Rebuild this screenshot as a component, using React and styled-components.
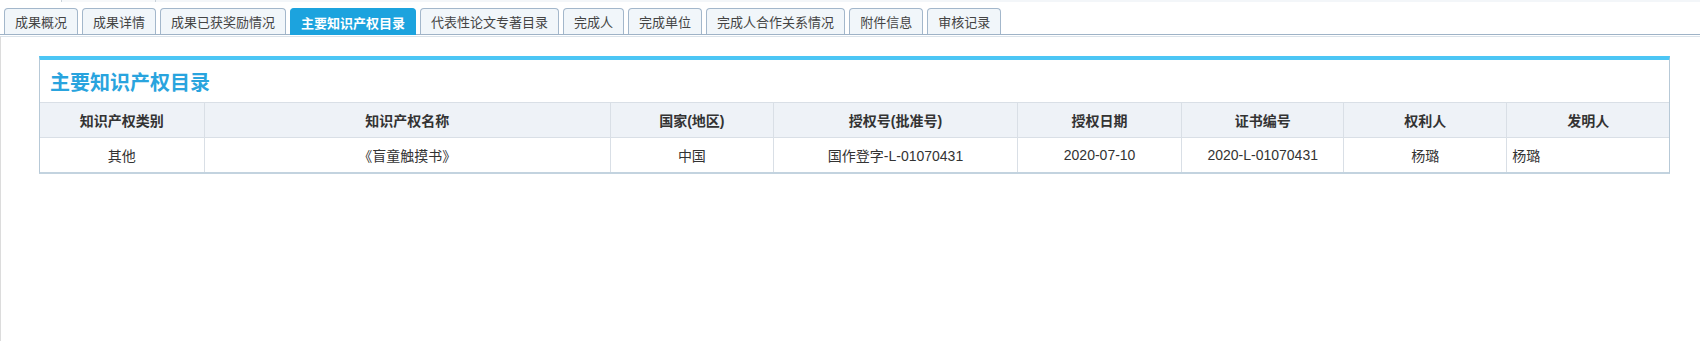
import React from 'react';
import styled, { createGlobalStyle } from 'styled-components';

const GlobalStyle = createGlobalStyle`
  html, body {
    margin: 0;
    padding: 0;
    background: #fff;
  }
  body {
    font-family: "Liberation Sans", "Noto Sans CJK SC", sans-serif;
    color: #333;
  }
`;

const Page = styled.div`
  width: 1700px;
  height: 341px;
  overflow: hidden;
  display: flex;
  flex-direction: column;
`;

const TopStrip = styled.div`
  height: 2px;
  display: flex;
  background: #f3f6f9;
`;

const StripCell = styled.div`
  width: ${(p) => p.w}px;
  background: ${(p) => p.bg};
  border-right: 1px solid #c9d2da;
`;

const TabBar = styled.div`
  display: flex;
  align-items: flex-end;
  gap: 4px;
  padding: 6px 0 0 4px;
  border-bottom: 1px solid #9fb3c7;
`;

const Tab = styled.div`
  position: relative;
  height: 26px;
  box-sizing: border-box;
  padding: 0 10px;
  display: flex;
  align-items: center;
  font-size: 13px;
  white-space: nowrap;
  border: 1px solid ${(p) => (p.active ? '#1ca3de' : '#a3b7cb')};
  border-bottom: none;
  border-radius: 4px 4px 0 0;
  background: ${(p) => (p.active ? '#1ca3de' : '#f1f6fa')};
  color: ${(p) => (p.active ? '#fff' : '#444')};
  font-weight: ${(p) => (p.active ? 'bold' : 'normal')};
  margin-bottom: ${(p) => (p.active ? '-1px' : '0')};
  height: ${(p) => (p.active ? '27px' : '26px')};
`;

const Content = styled.div`
  flex: 1;
  margin-top: 1px;
  border-top: 1px solid #dae2e9;
  border-left: 1px solid #dcdcdc;
  padding: 19px 30px 0 38px;
`;

const Panel = styled.div`
  border-top: 4px solid #4cc6f5;
  border-left: 1px solid #b7c9d7;
  border-right: 1px solid #b7c9d7;
  border-bottom: 2px solid #c3d3df;
  background: #fff;
`;

const PanelTitle = styled.div`
  height: 42px;
  display: flex;
  align-items: center;
  padding-left: 10px;
  font-size: 20px;
  font-weight: bold;
  color: #29a4de;
`;

const Table = styled.table`
  width: 100%;
  border-collapse: collapse;
  table-layout: fixed;
  font-size: 14px;
`;

const HeadCell = styled.th`
  height: 34px;
  padding: 0 5px;
  background: #eef2f7;
  border: 1px solid #d9dfe6;
  font-weight: bold;
  color: #333;
  text-align: center;
  &:first-child { border-left: none; }
  &:last-child { border-right: none; }
`;

const Cell = styled.td`
  height: 34px;
  padding: 0 5px;
  border: 1px solid #d9dfe6;
  border-bottom: none;
  color: #333;
  text-align: ${(p) => p.align || 'center'};
  &:first-child { border-left: none; }
  &:last-child { border-right: none; }
`;

const tabs = [
  '成果概况',
  '成果详情',
  '成果已获奖励情况',
  '主要知识产权目录',
  '代表性论文专著目录',
  '完成人',
  '完成单位',
  '完成人合作关系情况',
  '附件信息',
  '审核记录',
];

const columns = [
  { title: '知识产权类别', width: 164 },
  { title: '知识产权名称', width: 406 },
  { title: '国家(地区)', width: 163 },
  { title: '授权号(批准号)', width: 244 },
  { title: '授权日期', width: 164 },
  { title: '证书编号', width: 162 },
  { title: '权利人', width: 163 },
  { title: '发明人', width: 162 },
];

const rows = [
  ['其他', '《盲童触摸书》', '中国', '国作登字-L-01070431', '2020-07-10', '2020-L-01070431', '杨璐', '杨璐'],
];

export default function App() {
  return (
    <Page>
      <GlobalStyle />
      <TopStrip>
        <StripCell w={61} bg="#fff" />
        <StripCell w={93} bg="#f6f8fa" />
      </TopStrip>
      <TabBar>
        {tabs.map((t) => (
          <Tab key={t} active={t === '主要知识产权目录'}>
            {t}
          </Tab>
        ))}
      </TabBar>
      <Content>
        <Panel>
          <PanelTitle>主要知识产权目录</PanelTitle>
          <Table>
            <colgroup>
              {columns.map((c) => (
                <col key={c.title} style={{ width: c.width }} />
              ))}
            </colgroup>
            <thead>
              <tr>
                {columns.map((c) => (
                  <HeadCell key={c.title}>{c.title}</HeadCell>
                ))}
              </tr>
            </thead>
            <tbody>
              {rows.map((r, i) => (
                <tr key={i}>
                  {r.map((v, j) => (
                    <Cell key={j} align={j === r.length - 1 ? 'left' : 'center'}>
                      {v}
                    </Cell>
                  ))}
                </tr>
              ))}
            </tbody>
          </Table>
        </Panel>
      </Content>
    </Page>
  );
}
